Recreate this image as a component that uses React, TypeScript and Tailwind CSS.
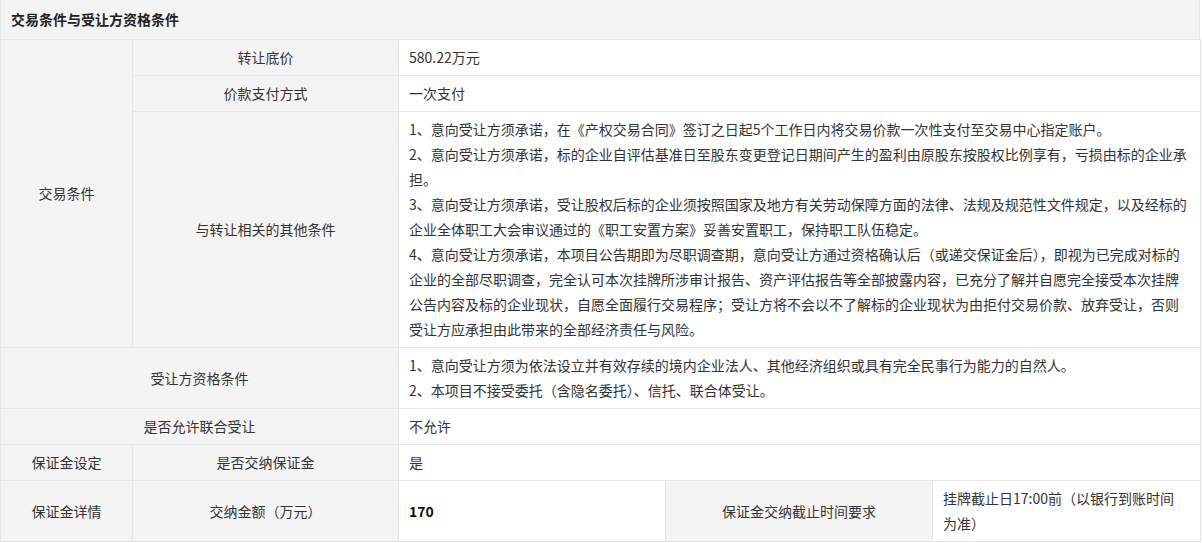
const label = 'border border-[#e6e6e6] bg-[#f4f4f4] px-[10px] py-[5px] text-center align-middle font-normal';
const value = 'border border-[#e6e6e6] bg-white px-[10px] py-[5px] text-left align-middle';

const otherTerms = [
  '1、意向受让方须承诺，在《产权交易合同》签订之日起5个工作日内将交易价款一次性支付至交易中心指定账户。',
  '2、意向受让方须承诺，标的企业自评估基准日至股东变更登记日期间产生的盈利由原股东按股权比例享有，亏损由标的企业承担。',
  '3、意向受让方须承诺，受让股权后标的企业须按照国家及地方有关劳动保障方面的法律、法规及规范性文件规定，以及经标的企业全体职工大会审议通过的《职工安置方案》妥善安置职工，保持职工队伍稳定。',
  '4、意向受让方须承诺，本项目公告期即为尽职调查期，意向受让方通过资格确认后（或递交保证金后），即视为已完成对标的企业的全部尽职调查，完全认可本次挂牌所涉审计报告、资产评估报告等全部披露内容，已充分了解并自愿完全接受本次挂牌公告内容及标的企业现状，自愿全面履行交易程序；受让方将不会以不了解标的企业现状为由拒付交易价款、放弃受让，否则受让方应承担由此带来的全部经济责任与风险。',
];

const buyerTerms = [
  '1、意向受让方须为依法设立并有效存续的境内企业法人、其他经济组织或具有完全民事行为能力的自然人。',
  '2、本项目不接受委托（含隐名委托）、信托、联合体受让。',
];

export default function App() {
  return (
    <div className="w-[1200px] bg-white font-['Noto_Sans_CJK_SC',sans-serif] text-[14px] leading-[25px] text-[#333]">
      <div className="flex h-[39px] items-center border-x border-[#e6e6e6] bg-[#f4f4f4] px-[10px] font-bold text-[#222]">
        交易条件与受让方资格条件
      </div>
      <table className="w-[1200px] table-fixed border-collapse">
        <colgroup>
          <col className="w-[132px]" />
          <col className="w-[266px]" />
          <col className="w-[267px]" />
          <col className="w-[267px]" />
          <col className="w-[268px]" />
        </colgroup>
        <tbody>
          <tr>
            <td rowSpan={3} className={label}>交易条件</td>
            <td className={label}>转让底价</td>
            <td colSpan={3} className={value}>580.22万元</td>
          </tr>
          <tr>
            <td className={label}>价款支付方式</td>
            <td colSpan={3} className={value}>一次支付</td>
          </tr>
          <tr>
            <td className={label}>与转让相关的其他条件</td>
            <td colSpan={3} className={value}>
              {otherTerms.map((t) => (
                <p key={t}>{t}</p>
              ))}
            </td>
          </tr>
          <tr>
            <td colSpan={2} className={label}>受让方资格条件</td>
            <td colSpan={3} className={value}>
              {buyerTerms.map((t) => (
                <p key={t}>{t}</p>
              ))}
            </td>
          </tr>
          <tr>
            <td colSpan={2} className={label}>是否允许联合受让</td>
            <td colSpan={3} className={value}>不允许</td>
          </tr>
          <tr>
            <td className={label}>保证金设定</td>
            <td className={label}>是否交纳保证金</td>
            <td colSpan={3} className={value}>是</td>
          </tr>
          <tr>
            <td className={label}>保证金详情</td>
            <td className={label}>交纳金额（万元）</td>
            <td className={`${value} font-bold text-[#111]`}>170</td>
            <td className={label}>保证金交纳截止时间要求</td>
            <td className={value}>
              挂牌截止日17:00前（以银行到账时间
              <br />
              为准）
            </td>
          </tr>
        </tbody>
      </table>
    </div>
  );
}
